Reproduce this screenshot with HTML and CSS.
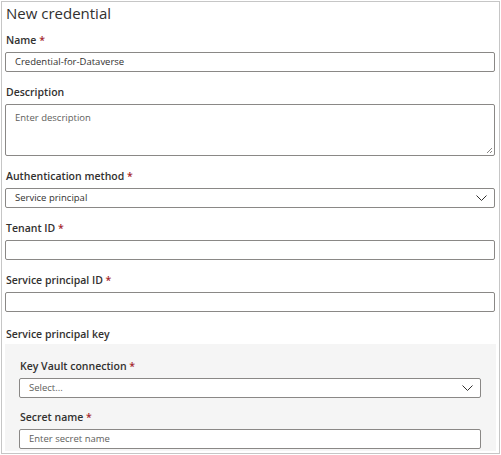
FILE: index.html
```html
<!DOCTYPE html>
<html lang="en">

<head>
    <meta charset="UTF-8">
    <title>New credential</title>
    <link rel="stylesheet" href="styles.css">
</head>

<body>
    <div class="panel">
        <h1>New credential</h1>

        <div class="field">
            <label>Name <span class="req">*</span></label>
            <div class="box">Credential-for-Dataverse</div>
        </div>

        <div class="field">
            <label>Description</label>
            <div class="box area placeholder">Enter description
                <svg class="grip" width="7" height="7" viewBox="0 0 7 7">
                    <path d="M6 1 L1 6 M6 4 L4 6" stroke="#8a8886" stroke-width="1" fill="none" />
                </svg>
            </div>
        </div>

        <div class="field">
            <label>Authentication method <span class="req">*</span></label>
            <div class="box select">Service principal
                <svg class="chev" width="11" height="7" viewBox="0 0 11 7">
                    <polyline points="0.5,0.5 5.5,5.5 10.5,0.5" stroke="#323130" stroke-width="1" fill="none" />
                </svg>
            </div>
        </div>

        <div class="field">
            <label>Tenant ID <span class="req">*</span></label>
            <div class="box"></div>
        </div>

        <div class="field">
            <label>Service principal ID <span class="req">*</span></label>
            <div class="box"></div>
        </div>

        <label class="group-title">Service principal key</label>
        <div class="group">
            <div class="field">
                <label>Key Vault connection <span class="req">*</span></label>
                <div class="box select placeholder">Select...
                    <svg class="chev" width="11" height="7" viewBox="0 0 11 7">
                        <polyline points="0.5,0.5 5.5,5.5 10.5,0.5" stroke="#323130" stroke-width="1" fill="none" />
                    </svg>
                </div>
            </div>
            <div class="field last">
                <label>Secret name <span class="req">*</span></label>
                <div class="box placeholder">Enter secret name</div>
            </div>
        </div>
    </div>
</body>

</html>
```

FILE: styles.css
```css
body {
    margin: 1px 1px 0 1px;
    font-family: "Open Sans", "Noto Sans", sans-serif;
    color: #323130;
    background-color: white;
}

.panel {
    width: 490px;
    height: 451px;
    border: 1px solid #c6c6c6;
    padding: 0 4px 0 3px;
    overflow: hidden;
}

h1 {
    font-size: 15px;
    font-weight: 400;
    line-height: 22px;
    margin: 0 0 8px 1px;
}

label {
    display: block;
    font-size: 10.5px;
    font-weight: 600;
    line-height: 16px;
    margin: 0 0 4px 1px;
}

.req {
    color: #a4262c;
}

.field {
    margin-bottom: 12px;
}

.box {
    position: relative;
    height: 20px;
    box-sizing: border-box;
    border: 1px solid #8a8886;
    border-radius: 2px;
    padding: 0 8px 0 9px;
    font-size: 9.5px;
    line-height: 18px;
    background-color: white;
}

.placeholder {
    color: #605e5c;
}

.area {
    height: 52px;
    padding-top: 4px;
}

.grip {
    position: absolute;
    right: 1px;
    bottom: 1px;
}

.chev {
    position: absolute;
    right: 7px;
    top: 6px;
}

.group-title {
    margin-top: 14px;
    margin-bottom: 2px;
}

.group {
    background-color: #f5f5f5;
    padding: 14px 15px 2px 14px;
    margin-right: -1px;
}

.group .field {
    margin-bottom: 11px;
}

.group .field.last {
    margin-bottom: 0;
}
```
